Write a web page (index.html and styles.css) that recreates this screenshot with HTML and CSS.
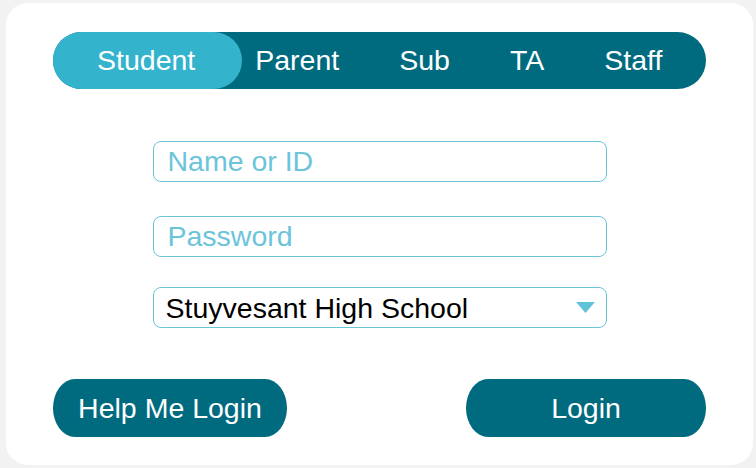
FILE: index.html
```html
<!DOCTYPE html>
<html lang="en">
<head>
<meta charset="utf-8">
<title>Login</title>
<link rel="stylesheet" href="styles.css">
</head>
<body>
<main class="card">
  <nav class="tabs">
    <span class="tab active">Student</span>
    <span class="tab">Parent</span>
    <span class="tab">Sub</span>
    <span class="tab">TA</span>
    <span class="tab">Staff</span>
  </nav>
  <form class="fields">
    <input class="field field-name" type="text" placeholder="Name or ID">
    <input class="field field-pass" type="password" placeholder="Password">
    <div class="field select">
      <select class="select-input">
        <option>Stuyvesant High School</option>
      </select>
      <svg class="caret" width="19" height="11" viewBox="0 0 19 11"><polygon points="0,0 19,0 9.5,11" fill="#5fc2d8"/></svg>
    </div>
  </form>
  <div class="actions">
    <button class="btn btn-help" type="button">Help Me Login</button>
    <button class="btn btn-login" type="button">Login</button>
  </div>
</main>
</body>
</html>
```

FILE: styles.css
```css
* { box-sizing: border-box; }
html, body { margin: 0; padding: 0; }
body {
  background: #f2f2f2;
  font-family: "Liberation Sans", Arial, sans-serif;
  padding: 3px 3px 3px 6px;
}
.card {
  width: 747px;
  height: 462px;
  background: #fff;
  border-radius: 22px;
  padding: 29px 47px 28px 47px;
  display: flex;
  flex-direction: column;
}
.tabs {
  height: 57px;
  background: #006b7f;
  border-radius: 29px;
  display: flex;
  align-items: stretch;
  justify-content: space-between;
  padding: 0 14px;
}
.tab {
  display: flex;
  align-items: center;
  padding: 0 30px;
  color: #fff;
  font-size: 28.5px;
  line-height: 1;
}
.tab.active {
  background: #33b3cc;
  border-radius: 29px;
  margin: 0 -17px 0 -14px;
  padding: 0 47px 0 44px;
}
.fields {
  margin: 52px auto 0;
  width: 454px;
  display: flex;
  flex-direction: column;
}
.field {
  height: 41px;
  border: 1.5px solid #68c5da;
  border-radius: 8px;
  font-family: "Liberation Sans", Arial, sans-serif;
  font-size: 28.5px;
  padding: 0 13px 0 14px;
  color: #000;
  background: #fff;
  outline: none;
}
.field::placeholder { color: #6cc4da; }
.field-pass { margin-top: 34px; }
.select {
  margin-top: 30px;
  display: flex;
  align-items: center;
  padding: 0 11px 0 12px;
}
.select-input {
  flex: 1;
  appearance: none;
  -webkit-appearance: none;
  border: none;
  background: transparent;
  font-family: inherit;
  font-size: 28.5px;
  color: #000;
  padding: 0;
  outline: none;
}
.caret { display: block; flex: none; }
.actions {
  margin-top: auto;
  display: flex;
  justify-content: space-between;
}
.btn {
  height: 58px;
  border: none;
  background: #006b7f;
  color: #fff;
  font-family: "Liberation Sans", Arial, sans-serif;
  font-size: 28.5px;
  border-radius: 22px / 29px;
  padding: 0;
}
.btn-help { width: 234px; }
.btn-login { width: 240px; }
```
